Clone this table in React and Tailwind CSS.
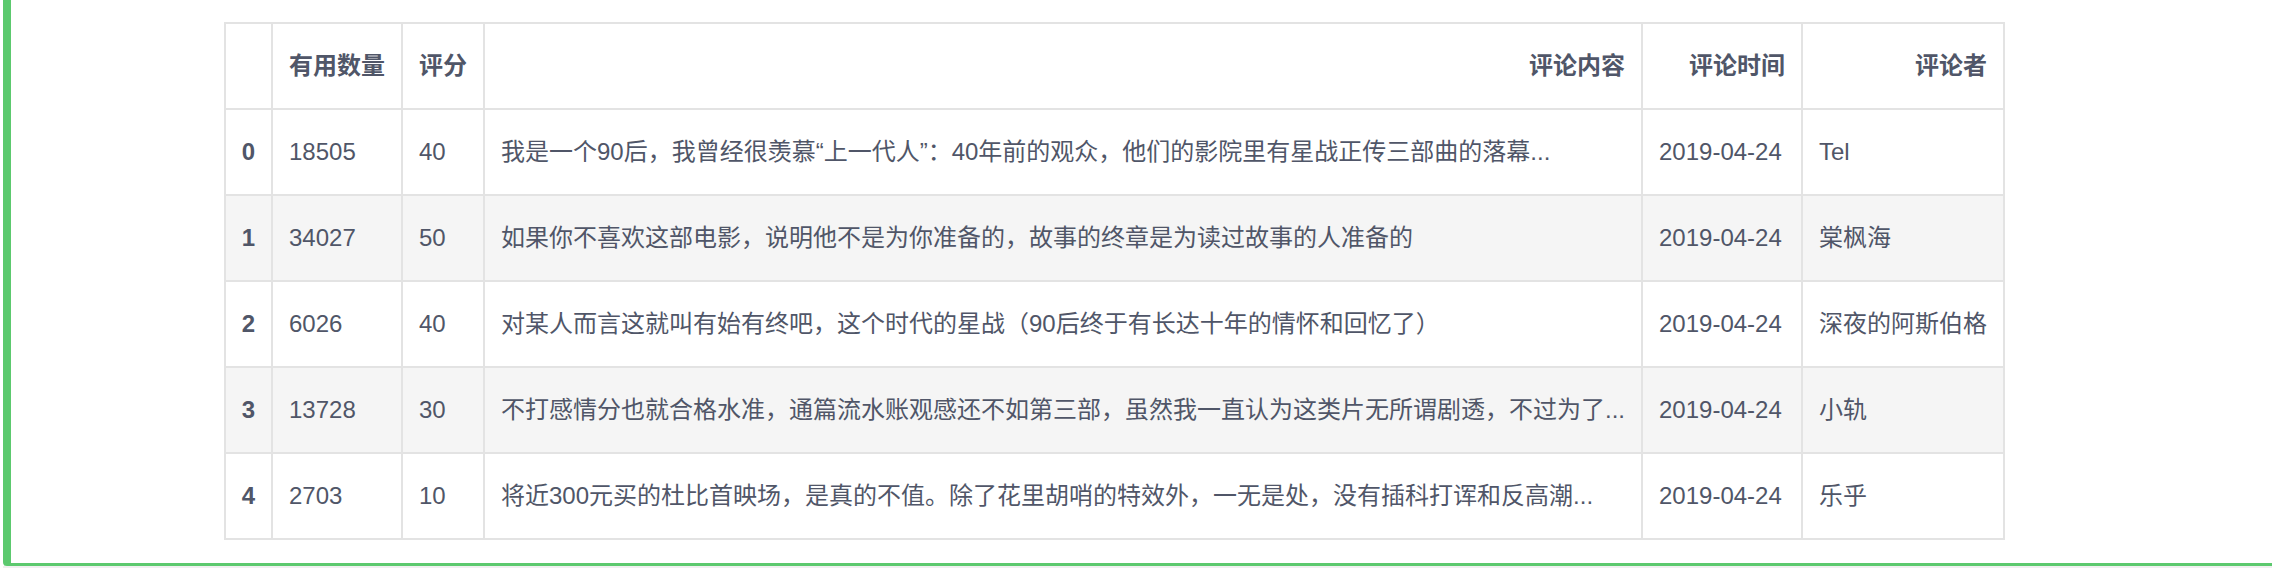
import React from "react";

const rows = [
  ["0", "18505", "40", "我是一个90后，我曾经很羡慕“上一代人”：40年前的观众，他们的影院里有星战正传三部曲的落幕...", "2019-04-24", "Tel"],
  ["1", "34027", "50", "如果你不喜欢这部电影，说明他不是为你准备的，故事的终章是为读过故事的人准备的", "2019-04-24", "棠枫海"],
  ["2", "6026", "40", "对某人而言这就叫有始有终吧，这个时代的星战（90后终于有长达十年的情怀和回忆了）", "2019-04-24", "深夜的阿斯伯格"],
  ["3", "13728", "30", "不打感情分也就合格水准，通篇流水账观感还不如第三部，虽然我一直认为这类片无所谓剧透，不过为了...", "2019-04-24", "小轨"],
  ["4", "2703", "10", "将近300元买的杜比首映场，是真的不值。除了花里胡哨的特效外，一无是处，没有插科打诨和反高潮...", "2019-04-24", "乐乎"],
];

const headers = ["", "有用数量", "评分", "评论内容", "评论时间", "评论者"];

export default function App() {
  return (
    <div
      className="w-[2272px] h-[568px] bg-white pl-[3px] overflow-hidden flex flex-col text-[#505668]"
      style={{ fontFamily: '"Liberation Sans", "Noto Sans CJK SC", sans-serif' }}
    >
      {/* selected cell */}
      <div className="h-[566px] shrink-0 border-l-[8px] border-b-[3px] border-[#5cc96e] rounded-bl-[4px] pt-[22px] pl-[213px]">
        <div className="grid grid-cols-[47px_130px_82px_1158px_160px_202px] w-max border-l-2 border-t-2 border-[#e3e3e3] text-[24px] leading-none">
          {headers.map((h, i) => (
            <div
              key={"h" + i}
              className="h-[86px] flex items-center justify-end px-4 border-r-2 border-b-2 border-[#e3e3e3] font-bold whitespace-nowrap"
            >
              {h}
            </div>
          ))}
          {rows.map((r, ri) =>
            r.map((c, ci) => (
              <div
                key={ri + "-" + ci}
                className={
                  "h-[86px] flex items-center px-4 border-r-2 border-b-2 border-[#e3e3e3] whitespace-nowrap overflow-hidden " +
                  (ri % 2 === 1 ? "bg-[#f5f5f5] " : "bg-white ") +
                  (ci === 0 ? "justify-center font-bold" : "justify-start")
                }
              >
                {c}
              </div>
            ))
          )}
        </div>
      </div>
      <div className="flex-1 bg-[#f0f0f0]" />
    </div>
  );
}
